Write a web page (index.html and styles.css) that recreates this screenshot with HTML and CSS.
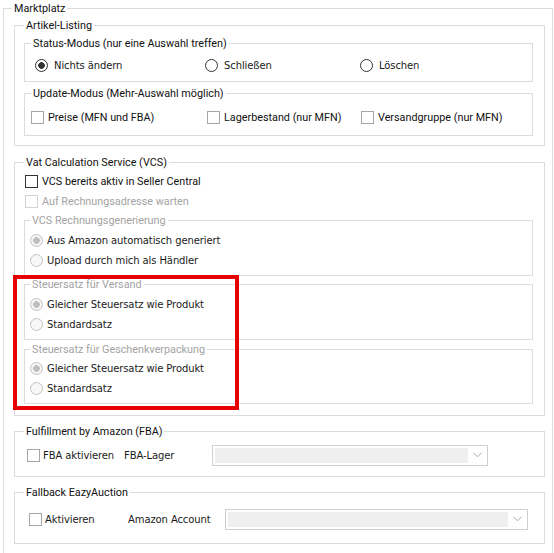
FILE: index.html
```html
<!DOCTYPE html>
<html lang="de">
<head>
<meta charset="utf-8">
<title>Marktplatz</title>
<link rel="stylesheet" href="styles.css">
</head>
<body>
<fieldset class="grp g-outer">
  <legend class="lg lg-outer">Marktplatz</legend>

  <fieldset class="grp g-sec g-artikel">
    <legend class="lg lg-sec">Artikel-Listing</legend>

    <fieldset class="grp g-sub g-status">
      <legend class="lg lg-sub">Status-Modus (nur eine Auswahl treffen)</legend>
      <div class="row status-row">
        <label class="opt opt-status"><span class="rd on"></span><span class="tw">Nichts ändern</span></label>
        <label class="opt opt-status"><span class="rd"></span><span class="tw">Schließen</span></label>
        <label class="opt opt-status"><span class="rd"></span><span class="tw">Löschen</span></label>
      </div>
    </fieldset>

    <fieldset class="grp g-sub g-update">
      <legend class="lg lg-sub">Update-Modus (Mehr-Auswahl möglich)</legend>
      <div class="row update-row">
        <label class="opt"><span class="cb light"></span><span class="ts">Preise (MFN und FBA)</span></label>
        <label class="opt"><span class="cb light"></span><span class="ts">Lagerbestand (nur MFN)</span></label>
        <label class="opt"><span class="cb light"></span><span class="ts">Versandgruppe (nur MFN)</span></label>
      </div>
    </fieldset>
  </fieldset>

  <fieldset class="grp g-sec g-vcs">
    <legend class="lg lg-sec">Vat Calculation Service (VCS)</legend>
    <div class="vcs-checks">
      <label class="opt line"><span class="cb"></span><span class="ts">VCS bereits aktiv in Seller Central</span></label>
      <label class="opt line disabled"><span class="cb dis"></span><span class="ts">Auf Rechnungsadresse warten</span></label>
    </div>

    <fieldset class="grp g-sub g-rechnung">
      <legend class="lg lg-sub2 lg-dis">VCS Rechnungsgenerierung</legend>
      <div class="radio-list">
        <label class="opt line"><span class="rd dis on"></span><span class="tw">Aus Amazon automatisch generiert</span></label>
        <label class="opt line"><span class="rd dis"></span><span class="tw">Upload durch mich als Händler</span></label>
      </div>
    </fieldset>

    <fieldset class="grp g-sub g-versand">
      <legend class="lg lg-sub2 lg-dis">Steuersatz für Versand</legend>
      <div class="radio-list">
        <label class="opt line"><span class="rd dis on"></span><span class="tw">Gleicher Steuersatz wie Produkt</span></label>
        <label class="opt line"><span class="rd dis"></span><span class="tw">Standardsatz</span></label>
      </div>
    </fieldset>

    <fieldset class="grp g-sub g-geschenk">
      <legend class="lg lg-sub2 lg-dis">Steuersatz für Geschenkverpackung</legend>
      <div class="radio-list">
        <label class="opt line"><span class="rd dis on"></span><span class="tw">Gleicher Steuersatz wie Produkt</span></label>
        <label class="opt line"><span class="rd dis"></span><span class="tw">Standardsatz</span></label>
      </div>
    </fieldset>
  </fieldset>

  <fieldset class="grp g-sec g-fba">
    <legend class="lg lg-sec">Fulfillment by Amazon (FBA)</legend>
    <div class="row combo-row fba-row">
      <label class="opt fba-check"><span class="cb light"></span><span class="tw">FBA aktivieren</span></label>
      <span class="tw combo-label fba-label">FBA-Lager</span>
      <div class="combo fba-combo">
        <div class="combo-field"></div>
        <div class="combo-btn"><svg width="9" height="6" viewBox="0 0 9 6"><path d="M0.5 0.8 L4.5 4.8 L8.5 0.8" fill="none" stroke="#a8a8a8" stroke-width="1"/></svg></div>
      </div>
    </div>
  </fieldset>

  <fieldset class="grp g-sec g-fallback">
    <legend class="lg lg-sec">Fallback EazyAuction</legend>
    <div class="row combo-row fallback-row">
      <label class="opt fb-check"><span class="cb light"></span><span class="tw">Aktivieren</span></label>
      <span class="tw combo-label fb-label">Amazon Account</span>
      <div class="combo fb-combo">
        <div class="combo-field"></div>
        <div class="combo-btn"><svg width="9" height="6" viewBox="0 0 9 6"><path d="M0.5 0.8 L4.5 4.8 L8.5 0.8" fill="none" stroke="#a8a8a8" stroke-width="1"/></svg></div>
      </div>
    </div>
  </fieldset>
</fieldset>

<div class="highlight"></div>
</body>
</html>
```

FILE: styles.css
```css
* {
  box-sizing: border-box;
}

html,
body {
  margin: 0;
  padding: 0;
  background: #ffffff;
}

body {
  position: relative;
  width: 554px;
  height: 553px;
  overflow: hidden;
  padding-top: 1px;
  color: #111111;
  font-family: Roboto, "Liberation Sans", sans-serif;
  font-size: 10.8px;
}

/* ---------- group boxes ---------- */
.grp {
  min-width: 0;
  margin: 0;
  padding: 0;
  border: 1px solid #dcdcdc;
}

.lg {
  height: 15px;
  padding: 0 2px;
  font-family: Roboto, "Liberation Sans", sans-serif;
  font-size: 10.8px;
  line-height: 15px;
  color: #111111;
  white-space: nowrap;
}

.lg-outer { margin-left: 8px; }
.lg-sec   { margin-left: 9px; }
.lg-sub   { margin-left: 6px; }
.lg-sub2  { margin-left: 5px; }
.lg-dis   { color: #a3a3a3; }

.g-outer {
  margin: 0 1px 0 3px;
  padding-bottom: 14px;
}

.g-sec {
  margin: 0 7px 0 10px;
}

.g-sub {
  margin: 0 11px 0 9px;
}

/* vertical rhythm */
.g-artikel  { margin-top: 2px; padding-bottom: 9px; }
.g-status   { margin-top: 3px; }
.g-update   { margin-top: 4px; }
.g-vcs      { margin-top: 9px; padding-bottom: 11px; }
.g-rechnung { margin-top: 2px; }
.g-versand  { margin-top: 1px; }
.g-geschenk { margin-top: 2px; }
.g-fba      { margin-top: 8px; }
.g-fallback { margin-top: 8px; }

/* ---------- rows ---------- */
.row {
  display: flex;
  align-items: center;
}

.status-row {
  display: grid;
  grid-template-columns: 170px 155px auto;
  height: 18px;
  margin: 5px 0 7px;
  padding-left: 10px;
}

.update-row {
  display: grid;
  grid-template-columns: 176px 154px auto;
  height: 18px;
  margin: 7px 0 9px;
  padding-left: 6px;
}

.vcs-checks {
  padding: 1px 0 0 10px;
}

.radio-list {
  padding: 2px 0 5px 5px;
}

.g-geschenk .radio-list {
  padding-top: 1px;
}

.line {
  height: 20px;
}

.opt {
  display: flex;
  align-items: center;
  white-space: nowrap;
}

.ts {
  font-family: Roboto, "Liberation Sans", sans-serif;
  font-size: 10.8px;
}

.tw {
  font-family: "DejaVu Sans", Verdana, sans-serif;
  font-size: 10px;
  letter-spacing: -0.1px;
  color: #1a1a1a;
}

.disabled .ts {
  color: #a3a3a3;
}

/* ---------- checkbox ---------- */
.cb {
  flex: none;
  width: 13px;
  height: 13px;
  margin-right: 4px;
  border: 1px solid #333333;
  background: #ffffff;
}

.cb.light {
  border-color: #a6a6a6;
}

.cb.dis {
  border-color: #d2d2d2;
}

/* ---------- radio ---------- */
.rd {
  flex: none;
  width: 13px;
  height: 13px;
  margin-right: 4px;
  border: 1px solid #333333;
  border-radius: 50%;
  background: #ffffff;
}

.rd.on {
  background: radial-gradient(circle, #333333 0 3px, #ffffff 3.6px);
}

.rd.dis {
  border-color: #c2c2c2;
  background: #f7f7f7;
}

.rd.dis.on {
  background: radial-gradient(circle, #bdbdbd 0 3px, #f4f4f4 3.6px);
}

.opt-status .rd {
  margin-right: 6px;
}

/* ---------- combo rows ---------- */
.combo-row {
  height: 22px;
}

.fba-row {
  margin: 5px 0 10px;
  padding-left: 12px;
}

.fallback-row {
  margin: 8px 0 13px;
  padding-left: 14px;
}

.fba-check { width: 97px; }
.fba-label { width: 88px; }
.fba-combo { width: 276px; }

.fb-check { width: 99px; }
.fb-label { width: 97px; }
.fb-combo { width: 303px; }

.fba-check .cb,
.fb-check .cb {
  margin-right: 3px;
}

.combo-label {
  flex: none;
}

.combo {
  flex: none;
  display: flex;
  height: 21px;
  padding: 2px 0 2px 2px;
  border: 1px solid #d0d0d0;
  background: #ffffff;
}

.combo-field {
  flex: 1;
  background: #efefef;
}

.combo-btn {
  display: flex;
  align-items: center;
  justify-content: center;
  width: 19px;
}

/* ---------- annotation ---------- */
.highlight {
  position: absolute;
  left: 13px;
  top: 275px;
  width: 226px;
  height: 135px;
  border: 4px solid #e60000;
}
```
